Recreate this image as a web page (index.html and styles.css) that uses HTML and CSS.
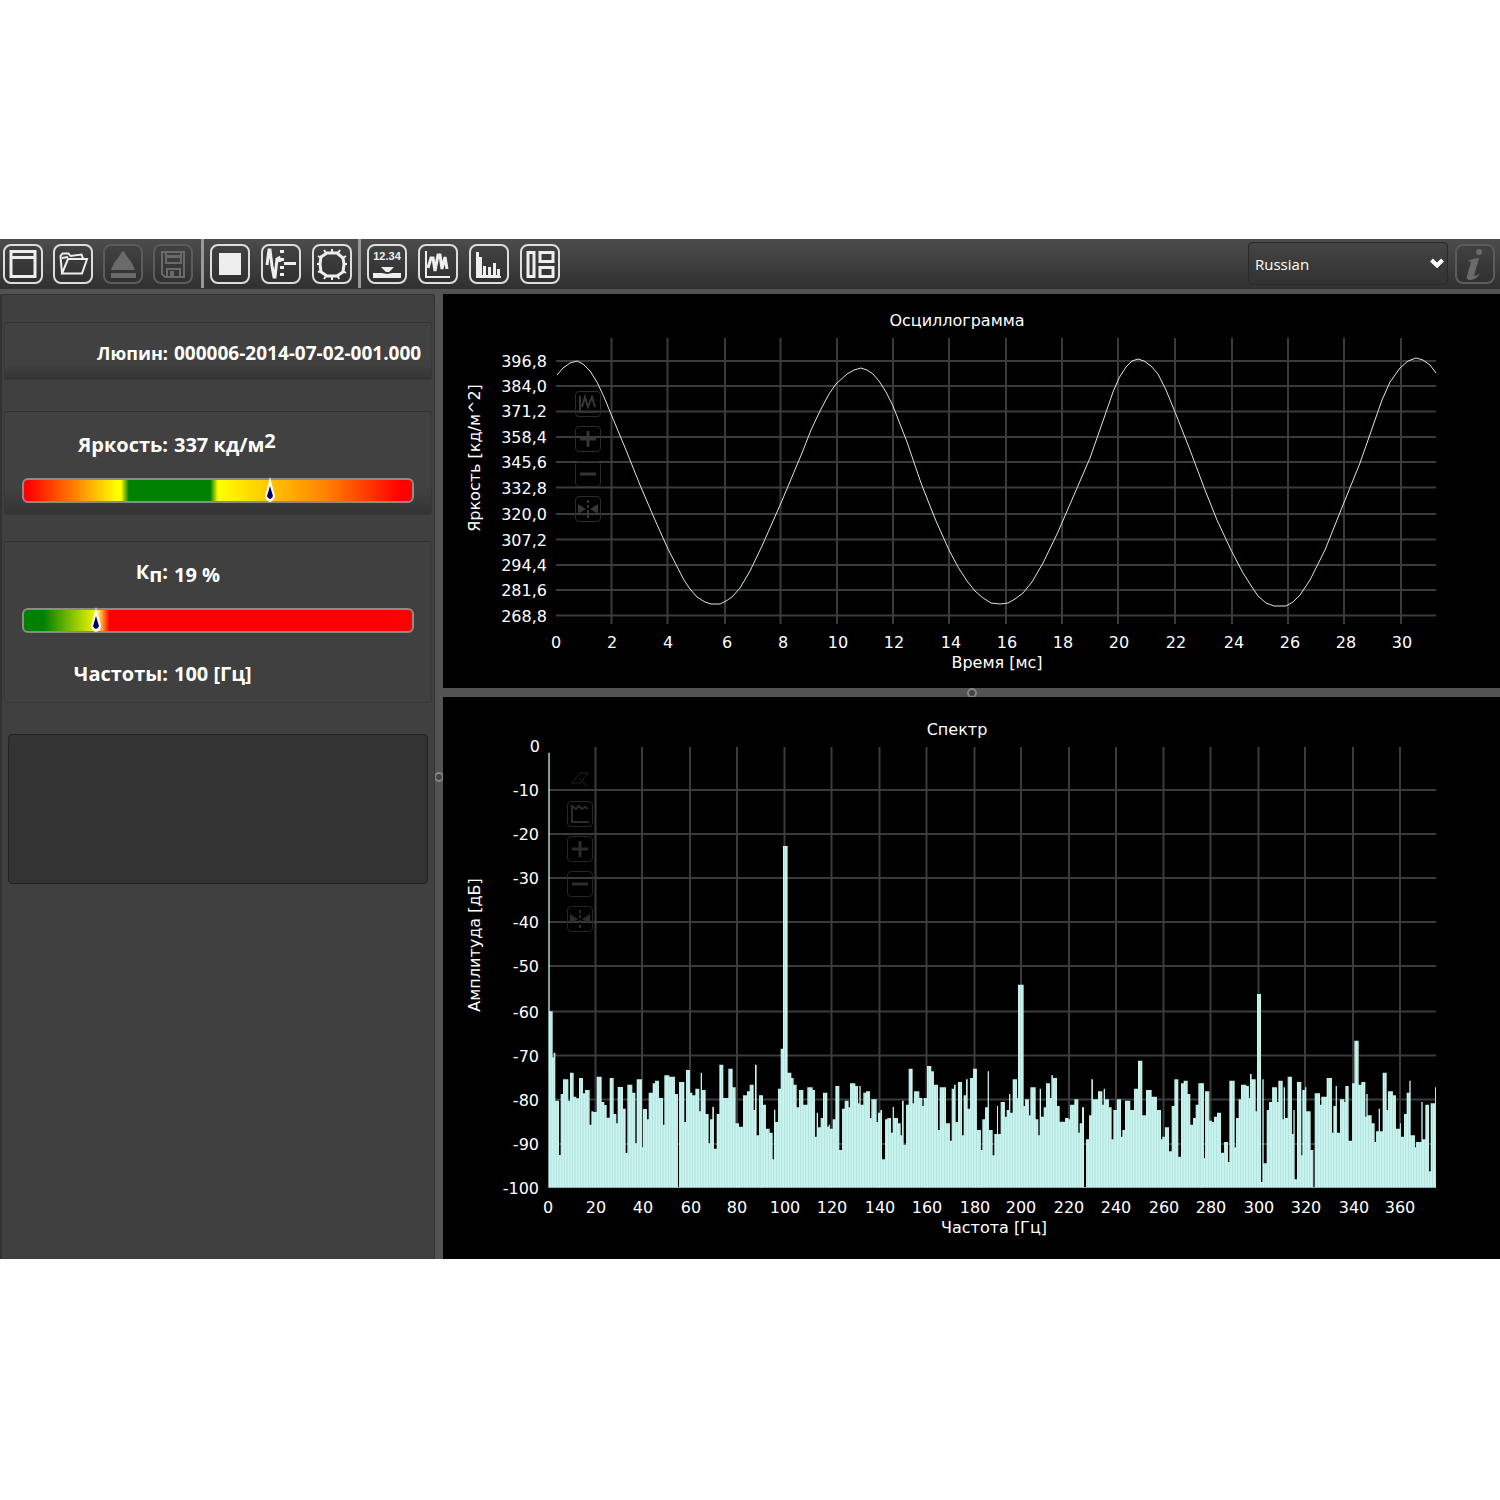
FILE: index.html
```html
<!DOCTYPE html>
<html lang="ru">
<head>
<meta charset="utf-8">
<title>Люпин</title>
<link rel="stylesheet" href="styles.css">
</head>
<body>
<div class="app">
  <header class="toolbar">
    <div class="tools">
      <button class="tool" type="button" aria-label="Окно"><svg viewBox="0 0 40 40"><path d="M8 7.500h24v25H8zM8 13.500h24" class="line wide"/></svg></button>
      <button class="tool" type="button" aria-label="Открыть"><svg viewBox="0 0 40 40"><path d="M9 29.500L7.500 12l2-2.500h6l2 2.500 11-1.500 1.500 4M9 29.500l6-14.500h19l-5 14.500zM9 14l6-1" class="line"/></svg></button>
      <button class="tool" type="button" aria-label="Извлечь" disabled><svg viewBox="0 0 40 40"><path d="M20 7q1 0 3 4l6 8 3 7H8l3-7 6-8q2-4 3-4zM8 29h25v5H8z" class="solid"/></svg></button>
      <button class="tool" type="button" aria-label="Сохранить" disabled><svg viewBox="0 0 40 40"><path d="M9 8h22v25H12l-3-3zM13 9v10h15V9M14 33v-8h13v8" class="line"/><path d="M17 27h4v6h-4zM14 11h13v3H14z" class="solid"/></svg></button>
    </div>
    <span class="rule"></span>
    <div class="tools">
      <button class="tool" type="button" aria-label="Стоп"><svg viewBox="0 0 40 40"><path d="M9 9h22v22H9z" class="solid"/></svg></button>
      <button class="tool" type="button" aria-label="Запуск"><svg viewBox="0 0 40 40"><path d="M6 21L8 6 9 6 11 22 13 33 14 33 16 15 18 14 19 18" class="line wide"/><path d="M19 6h4v3h-4zM19 14h4v3h-4zM19 22h4v3h-4zM19 29h4v3h-4zM23 18h12v3H23z" class="solid"/></svg></button>
      <button class="tool" type="button" aria-label="Круговой режим"><svg viewBox="0 0 40 40"><path d="M15 9h10l6 5 1 6-1 8-6 4H15l-6-4-1-8 1-7z" class="line wide"/><path d="M20 9V5M26 9l2-3M31 14l3-2M32 20h3M31 27l3 2M26 32l1 3M20 32v4M14 32l-2 3M9 27l-3 1M8 20H5M9 14l-3-2M14 9l-2-3" class="line"/></svg></button>
    </div>
    <span class="rule"></span>
    <div class="tools">
      <button class="tool" type="button" aria-label="Значения"><svg viewBox="0 0 40 40"><text x="20" y="16" text-anchor="middle" class="digits">12.34</text><path d="M14 23h13l-5 5h-3zM6 29h9l5 1 5-1h9v5H6z" class="solid"/></svg></button>
      <button class="tool" type="button" aria-label="Осциллограмма"><svg viewBox="0 0 40 40"><path d="M8 7v26h24" class="line"/><path d="M10 24l3-10 2 0 2 13 3-16 2 0 2 14 3-12 2 12" class="line wide"/></svg></button>
      <button class="tool" type="button" aria-label="Спектр"><svg viewBox="0 0 40 40"><path d="M7 8h3v5h3v18h1V22h3v9h2v-8h3v8h2V19h3v12h1v-6h3v7h1v2H7z" class="solid"/></svg></button>
      <button class="tool" type="button" aria-label="Компоновка"><svg viewBox="0 0 40 40"><path d="M8 8.500h6v24H8zM20 8.500h13v9H20zM20 23.500h13v9H20z" class="line wide"/></svg></button>
    </div>
    <div class="language">
      <select aria-label="Language"><option>Russian</option></select>
      <svg class="chevron" viewBox="0 0 14 10"><path d="M1.500 2L7 7.500 12.500 2"/></svg>
    </div>
    <button class="tool" type="button" aria-label="Информация" disabled><svg viewBox="0 0 40 40"><circle cx="24" cy="8" r="3" class="solid"/><path d="M13 17q5-3 11-3l-5 18q3 0 6-3-3 7-10 7-4 0-3-4l4-14z" class="solid"/></svg></button>
  </header>

  <main class="workspace">
    <aside class="sidebar">
      <section class="card">
        <dl class="reading device"><dt>Люпин:</dt><dd>000006-2014-07-02-001.000</dd></dl>
      </section>
      <section class="card">
        <dl class="reading"><dt>Яркость:</dt><dd>337 кд/м<sup>2</sup></dd></dl>
        <div class="gauge luminance" role="meter" aria-label="Яркость" aria-valuenow="337" aria-valuemin="0" aria-valuemax="533">
          <svg class="pointer" style="left:63.300%" viewBox="0 0 12 28"><path d="M6 1l2 8 3 11q-1 5-5 6-4-1-5-6L4 9z" fill="#fff"/><path d="M6 10l3 10q-1 3-3 3-2 0-3-3z" fill="#000064"/></svg>
        </div>
      </section>
      <section class="card pulse">
        <dl class="reading"><dt><span class="symbol">К<sub>п</sub>:</span></dt><dd>19 %</dd></dl>
        <div class="gauge pulsation" role="meter" aria-label="Кп" aria-valuenow="19" aria-valuemin="0" aria-valuemax="100">
          <svg class="pointer" style="left:18.500%" viewBox="0 0 12 28"><path d="M6 1l2 8 3 11q-1 5-5 6-4-1-5-6L4 9z" fill="#fff"/><path d="M6 10l3 10q-1 3-3 3-2 0-3-3z" fill="#000064"/></svg>
        </div>
        <dl class="reading"><dt>Частоты:</dt><dd>100 [Гц]</dd></dl>
      </section>
      <textarea class="notes" aria-label="Заметки"></textarea>
    </aside>
    <div class="splitter vertical"><span class="grip"></span></div>
    <div class="charts">
      <section class="chart">
        <svg class="plot" viewBox="443 294 1057 394" role="img" aria-label="Осциллограмма">
          <path class="grid" d="M611.500 338V624M667.500 338V624M725 338V624M780.500 338V624M837 338V624M893 338V624M949 338V624M1006 338V624M1062 338V624M1118 338V624M1175 338V624M1232 338V624M1288 338V624M1344 338V624M1401 338V624M556 361H1436M556 386H1436M556 411.500H1436M556 437H1436M556 462H1436M556 487.500H1436M556 514H1436M556 539.500H1436M556 565H1436M556 590H1436M556 615.500H1436"/>
          <path class="wave" d="M557 375L563 368 570 363 577 361 583 364 590 371 597 382 604 397 611 414 626 450 640 485 655 520 668 549 684 580 690 589 697 597 705 602 711 604 720 604 726 601 732 597 740 588 750 571 762 546 781 503 802 453 811 430 820 411 829 394 836 384 847 374 854 370 861 368 867 370 873 374 879 381 886 392 893 406 900 424 907 442 921 483 936 521 949 550 958 567 967 581 975 591 983 598 991 603 1000 604 1008 603 1015 599 1023 593 1032 582 1043 563 1058 532 1074 495 1090 458 1104 418 1113 392 1119 378 1126 367 1132 361 1138 359 1144 361 1151 366 1158 374 1166 390 1175 412 1190 450 1205 490 1217 520 1231 550 1243 573 1250 584 1258 596 1266 603 1274 606 1286 606 1293 602 1300 595 1310 580 1325 550 1343 505 1360 463 1375 420 1382 400 1390 382 1400 368 1408 361 1416 358 1423 360 1430 365 1436 373"/>
          <g text-anchor="middle">
            <text x="957" y="326">Осциллограмма</text>
            <text x="556" y="648">0</text><text x="612" y="648">2</text><text x="668" y="648">4</text><text x="727" y="648">6</text><text x="783" y="648">8</text><text x="838" y="648">10</text><text x="894" y="648">12</text><text x="951" y="648">14</text><text x="1007" y="648">16</text><text x="1063" y="648">18</text><text x="1119" y="648">20</text><text x="1176" y="648">22</text><text x="1234" y="648">24</text><text x="1290" y="648">26</text><text x="1346" y="648">28</text><text x="1402" y="648">30</text>
            <text x="997" y="668">Время [мс]</text>
            <text transform="translate(480 458) rotate(-90)">Яркость [кд/м^2]</text>
          </g>
          <g text-anchor="end">
            <text x="547" y="367">396,8</text><text x="547" y="392">384,0</text><text x="547" y="417">371,2</text><text x="547" y="443">358,4</text><text x="547" y="468">345,6</text><text x="547" y="494">332,8</text><text x="547" y="520">320,0</text><text x="547" y="546">307,2</text><text x="547" y="571">294,4</text><text x="547" y="596">281,6</text><text x="547" y="622">268,8</text>
          </g>
        </svg>
        <div class="zoom-tools">
          <button class="zoom" type="button" aria-label="Сигнал"><svg viewBox="0 0 26 26"><path d="M5 5v16h16M7 16l3-10 3 10 4-10 3 10"/></svg></button>
          <button class="zoom" type="button" aria-label="Увеличить"><svg viewBox="0 0 26 26"><path d="M13 5v16M5 13h16" class="thick"/></svg></button>
          <button class="zoom" type="button" aria-label="Уменьшить"><svg viewBox="0 0 26 26"><path d="M5 13h16" class="thick"/></svg></button>
          <button class="zoom" type="button" aria-label="Вписать"><svg viewBox="0 0 26 26"><path d="M3 8l8 5-8 5zM23 8l-8 5 8 5z" class="fill"/><path d="M13 4v18" stroke-dasharray="3 2"/></svg></button>
        </div>
      </section>
      <div class="splitter horizontal"><span class="grip"></span></div>
      <section class="chart spectrum">
        <svg class="plot" viewBox="443 697 1057 562" role="img" aria-label="Спектр">
          <defs>
            <pattern id="bins" width="8" height="8" patternUnits="userSpaceOnUse"><path d="M0 0h8v8H0z" fill="#c9f6f1"/><path d="M0 0h3v8H0z" fill="#b4e1dc"/></pattern>
          </defs>
          <path class="grid" d="M595.500 747V1188M642 747V1188M690 747V1188M737 747V1188M784.500 747V1188M831.500 747V1188M879.500 747V1188M926.500 747V1188M974.500 747V1188M1021 747V1188M1069 747V1188M1116 747V1188M1163.500 747V1188M1210.500 747V1188M1258.500 747V1188M1305 747V1188M1353 747V1188M1400 747V1188M549 790H1436M549 834H1436M549 878H1436M549 922H1436M549 966H1436M549 1011.500H1436M549 1055.500H1436M549 1099.500H1436M549 1144H1436"/>
          <g fill="url(#bins)">
            <path transform="translate(540 740) scale(.333333)" d="M25 1343V38H29V814H38V952H41V938H46V1082H57V1245H62V1062H69V1018H85V1082H90V998H101V1070H109V1075H117V1014H129V1060H135V1050H149V1154H154V1114H160V1116H170V1010H185V1086H193V1095H200V1133H209V1014H221V1122H229V1150H233V1041H249V1106H257V1239H262V1034H277V1058H286V1210H290V1018H306V1222H309V1107H321V1138H326V1058H338V1030H345V1022H357V1074H369V1154H373V1006H388V1010H405V1062H414V1341H417V1026H433V1146H438V990H450V1058H457V1066H466V1046H478V1114H482V998H486V1050H497V1122H506V1210H510V1138H517V1101H522V1226H530V1122H538V974H550V1074H565V986H578V1042H587V1150H597V1160H609V1066H621V1054H629V1034H641V1110H645V974H650V1186H657V1066H663V1343z"/>
            <path transform="translate(760 740) scale(.333333)" d="M0 1343V1066H9V1094H18V1166H29V1178H38V1258H42V1109H46V1146H54V1046H62V926H69V318H83V998H94V1014H101V1034H110V1102H117V1050H130V1094H142V1042H158V1050H165V1190H170V1118H174V1162H182V1134H189V1058H202V1160H206V1154H210V1166H218V1138H226V1038H238V1230H246V1106H254V1082H266V1102H270V1030H286V1038H294V1090H298V1038H302V1094H310V1058H318V1054H330V1134H334V1078H350V1146H354V1118H361V1110H366V1258H375V1138H382V1134H393V1178H398V1101H402V1134H414V1150H422V1186H426V1082H431V1214H438V1094H446V986H458V1090H462V1054H478V1074H487V1098H491V1074H501V978H514V994H522V1034H534V1170H539V1042H558V1150H570V1202H575V1046H582V1034H587V1146H594V1026H606V1186H611V1066H618V1018H623V1106H630V1014H639V986H651V1170H663V1343z"/>
            <path transform="translate(980 740) scale(.333333)" d="M0 1343V1170H3V1230H7V1138H15V1102H23V994H27V1170H38V1246H43V1182H51V1098H54V1182H62V1086H75V1130H80V1110H87V1062H91V1118H98V1018H111V1074H114V734H131V1098H135V1078H147V1126H151V1042H167V1138H175V1186H179V1046H183V1130H191V1102H198V1030H210V1074H214V1006H219V1014H231V1098H239V1145H255V1134H266V1138H270V1094H283V1078H295V1178H299V1150H306V1102H312V1341H318V1198H327V1126H334V1018H339V1078H354V1054H367V1094H371V1046H375V1078H387V1102H395V1198H400V1110H411V1078H423V1190H427V1170H435V1082H451V1110H462V1046H474V962H487V1126H498V1050H515V1070H531V1110H543V1198H547V1190H555V1162H567V1234H575V1098H583V1018H595V1250H603V1030H611V1022H623V1062H631V1154H639V1134H647V1094H655V1030H663V1343z"/>
            <path transform="translate(1200 740) scale(.333333)" d="M0 1343V1030H12V1254H15V1054H28V1142H36V1146H42V1130H51V1118H63V1238H72V1206H84V1266H88V1022H104V1222H108V1134H116V1078H123V1034H139V1038H147V1074H150V1002H155V1018H167V1114H171V762H183V1326H187V1018H191V1270H200V1110H207V1086H216V1042H231V1086H235V1022H248V1138H251V1042H255V1134H263V1010H276V1182H280V1110H284V1318H291V1026H304V1246H307V1050H315V1042H319V1114H332V1230H340V1341H344V1060H360V1094H364V1070H380V1014H396V1178H400V1098H407V1038H411V1178H420V1078H433V1086H436V1038H446V1202H456V1030H463V902H476V1034H484V1026H496V1130H499V1062H503V1126H515V1150H524V1206H528V1174H536V1106H540V1174H548V998H560V1110H564V1054H579V1066H588V1166H600V1150H603V1190H612V1122H620V1058H628V1022H632V1186H645V1222H648V1206H664V1086H668V1198H676V1094H687V1294H692V1090H705V1042H708V1343z"/>
          </g>
          <g text-anchor="middle">
            <text x="957" y="735">Спектр</text>
            <text x="548" y="1213">0</text><text x="596" y="1213">20</text><text x="643" y="1213">40</text><text x="691" y="1213">60</text><text x="737" y="1213">80</text><text x="785" y="1213">100</text><text x="832" y="1213">120</text><text x="880" y="1213">140</text><text x="927" y="1213">160</text><text x="975" y="1213">180</text><text x="1021" y="1213">200</text><text x="1069" y="1213">220</text><text x="1116" y="1213">240</text><text x="1164" y="1213">260</text><text x="1211" y="1213">280</text><text x="1259" y="1213">300</text><text x="1306" y="1213">320</text><text x="1354" y="1213">340</text><text x="1400" y="1213">360</text>
            <text x="994" y="1233">Частота [Гц]</text>
            <text transform="translate(480 945) rotate(-90)">Амплитуда [дБ]</text>
          </g>
          <g text-anchor="end">
            <text x="540" y="752">0</text><text x="539" y="796">-10</text><text x="539" y="840">-20</text><text x="539" y="884">-30</text><text x="539" y="928">-40</text><text x="539" y="972">-50</text><text x="539" y="1018">-60</text><text x="539" y="1062">-70</text><text x="539" y="1106">-80</text><text x="539" y="1150">-90</text><text x="539" y="1194">-100</text>
          </g>
        </svg>
        <div class="zoom-tools">
          <button class="zoom ghost" type="button" aria-label="Курсор"><svg viewBox="0 0 26 26"><path d="M5 17l8-10h8l-8 10zM12 12l8 8"/></svg></button>
          <button class="zoom" type="button" aria-label="Область"><svg viewBox="0 0 26 26"><path d="M5 22V5l4 3 3-3 3 3 3-2 3 2M5 21h17"/></svg></button>
          <button class="zoom" type="button" aria-label="Увеличить"><svg viewBox="0 0 26 26"><path d="M13 5v16M5 13h16" class="thick"/></svg></button>
          <button class="zoom" type="button" aria-label="Уменьшить"><svg viewBox="0 0 26 26"><path d="M5 13h16" class="thick"/></svg></button>
          <button class="zoom" type="button" aria-label="Вписать"><svg viewBox="0 0 26 26"><path d="M3 8l8 5-8 5zM23 8l-8 5 8 5z" class="fill"/><path d="M13 4v18" stroke-dasharray="3 2"/></svg></button>
        </div>
      </section>
    </div>
  </main>
</div>
</body>
</html>
```
FILE: styles.css
```css
* { box-sizing: border-box; }
body {
  margin: 0;
  padding: 239px 0;
  background: #fff;
  font-family: "Open Sans", "Noto Sans", sans-serif;
  color: #fff;
}
button, select, textarea { font: inherit; color: inherit; margin: 0; }
svg { display: block; }
.app { background: #404040; }

.toolbar {
  display: flex;
  align-items: center;
  height: 55px;
  padding: 0 5px 6px 3px;
  background: linear-gradient(#4c4c4c, #303030 50px, #525252 50px);
}
.tools { display: flex; gap: 11px; }
.tools:first-child { gap: 10px; }
.rule { width: 3px; height: 49px; margin: 0 6px; background: #999; }
.tools:first-child + .rule { margin-left: 8px; }
.tool {
  width: 40px;
  height: 40px;
  padding: 0;
  border: 2px solid #ddd;
  border-radius: 8px;
  background: linear-gradient(#424242, #303030);
  color: #eee;
}
.tool:disabled { border-color: #5c5c5c; color: #6a6a6a; }
.tool svg { width: 40px; height: 40px; margin: -2px; }
.line { fill: none; stroke: currentColor; stroke-width: 2; }
.wide { stroke-width: 3; }
.solid { fill: currentColor; }
.digits { font: bold 11px "Liberation Sans", sans-serif; fill: currentColor; }
.language { position: relative; width: 200px; margin: 0 7px 0 auto; }
.language select {
  display: block;
  width: 100%;
  height: 43px;
  padding: 0 6px;
  border: 1px solid #2a2a2a;
  border-radius: 4px;
  background: linear-gradient(#444, #323232);
  font-size: 15px;
  appearance: none;
}
.chevron {
  position: absolute;
  right: 4px;
  top: 16px;
  width: 14px;
  height: 10px;
  fill: none;
  stroke: #fff;
  stroke-width: 4;
  pointer-events: none;
}

.workspace { display: flex; }
.sidebar {
  display: flex;
  flex-direction: column;
  flex: 0 0 435px;
  padding: 27px 2px 0;
  border: solid #323232;
  border-width: 1px 1px 0 2px;
  border-radius: 4px 4px 0 0;
}
.card {
  display: flex;
  flex-direction: column;
  margin-bottom: 31px;
  padding: 16px 0 12px;
  border: 1px solid #383838;
  border-top-color: #323232;
  border-radius: 3px;
  background: linear-gradient(#414141 75%, #343434);
}
.card + .card { margin-bottom: 26px; padding: 18px 0 11px; }
.card + .card.pulse { margin-bottom: 31px; padding-bottom: 13px; background: #404040; }
.reading {
  display: grid;
  grid-template-columns: 163px 1fr;
  column-gap: 6px;
  margin: 0;
  font-weight: 700;
  font-size: 20px;
  line-height: 30px;
}
.reading.device { font-size: 19px; line-height: 28px; }
.device dt { font-size: 18px; }
dt { text-align: right; }
dd { margin: 0; }
sup { font-size: 20px; line-height: 0; vertical-align: 4px; }
sub { font-size: 20px; line-height: 0; vertical-align: -3px; }
.symbol { position: relative; top: -3px; }
.gauge {
  position: relative;
  height: 25px;
  margin: 18px 17px 0;
  border: 2px solid #8c8c84;
  border-radius: 6px;
}
.pulse .reading + .gauge { margin-bottom: 26px; }
.luminance { background: linear-gradient(90deg, #f00 1%, #ff8000 13%, #ff0 24%, #ff0 25%, #008000 27%, #008000 48%, #ff0 50%, #ffd000 61%, #ff8000 78%, #f00 97%); }
.pulsation { background: linear-gradient(90deg, #008000 5%, #a0d000 14%, #e8f000 18%, #ffff50 19%, #f00 22%); }
.pointer { position: absolute; top: -4px; width: 12px; height: 28px; margin-left: -6px; }
.notes {
  display: block;
  height: 150px;
  margin: 0 4px;
  border: 1px solid #222;
  border-radius: 4px;
  background: #333;
  resize: none;
}

.splitter { display: flex; align-items: center; justify-content: center; background: #545254; }
.vertical { flex: 0 0 8px; min-width: 0; overflow: hidden; }
.horizontal { height: 9px; }
.grip { flex: none; width: 10px; height: 10px; border: 2px solid #858585; border-radius: 50%; background: #444; }
.charts { flex: 1; min-width: 0; }
.chart { position: relative; background: #000; }
.plot { width: 100%; height: auto; font: 16px "DejaVu Sans", sans-serif; fill: #fff; }
.grid { fill: none; stroke: #fff; stroke-opacity: .23; stroke-width: 2; }
.wave { fill: none; stroke: #d4e8e4; stroke-width: 1; stroke-linejoin: round; }
.zoom-tools {
  position: absolute;
  top: 97px;
  left: 132px;
  display: flex;
  flex-direction: column;
  gap: 9px;
}
.spectrum .zoom-tools { top: 69px; left: 124px; }
.zoom { width: 26px; height: 26px; padding: 0; border: 1px solid #2c2c2c; border-radius: 4px; background: none; color: #363636; }
.spectrum .zoom { border-color: #262626; color: #2c2c2c; }
.spectrum .ghost { border-color: transparent; color: #101010; }
.zoom svg { width: 26px; height: 26px; margin: -1px; fill: none; stroke: currentColor; stroke-width: 2; }
.zoom .thick { stroke-width: 3; }
.zoom .fill { fill: currentColor; stroke: none; }
```
